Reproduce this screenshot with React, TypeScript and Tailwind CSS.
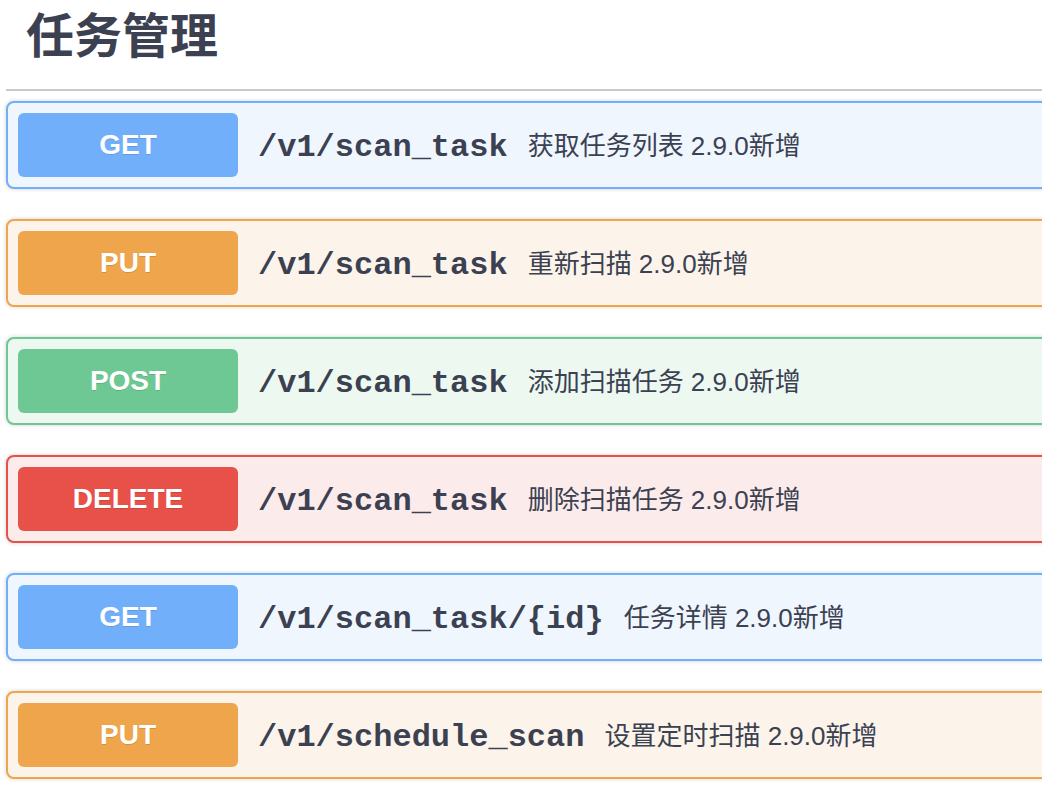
import React from 'react';

interface Op {
	method: 'GET' | 'PUT' | 'POST' | 'DELETE';
	path: string;
	summary: string;
}

const ops: Op[] = [
	{ method: 'GET', path: '/v1/scan_task', summary: '获取任务列表 2.9.0新增' },
	{ method: 'PUT', path: '/v1/scan_task', summary: '重新扫描 2.9.0新增' },
	{ method: 'POST', path: '/v1/scan_task', summary: '添加扫描任务 2.9.0新增' },
	{ method: 'DELETE', path: '/v1/scan_task', summary: '删除扫描任务 2.9.0新增' },
	{ method: 'GET', path: '/v1/scan_task/{id}', summary: '任务详情 2.9.0新增' },
	{ method: 'PUT', path: '/v1/schedule_scan', summary: '设置定时扫描 2.9.0新增' },
];

const styles: Record<Op['method'], { box: string; badge: string }> = {
	GET: { box: 'border-[#72affa] bg-[#eff6fe]', badge: 'bg-[#72affa]' },
	PUT: { box: 'border-[#efa54b] bg-[#fcf4ea]', badge: 'bg-[#efa54b]' },
	POST: { box: 'border-[#6ec893] bg-[#edf8f1]', badge: 'bg-[#6ec893]' },
	DELETE: { box: 'border-[#e8504a] bg-[#fcebeb]', badge: 'bg-[#e8504a]' },
};

const sans = "font-['Liberation_Sans','Noto_Sans_CJK_SC',sans-serif]";

const OpBlock: React.FC<{ op: Op }> = ({ op }) => {
	const s = styles[op.method];
	return (
		<div
			className={`mb-[30px] flex items-center rounded-[8px] border-2 p-[10px] shadow-[0_0_4px_rgba(0,0,0,0.18)] ${s.box}`}
		>
			{/* method badge */}
			<div
				className={`flex h-[64px] w-[220px] shrink-0 items-center justify-center rounded-[6px] text-[28px] font-bold text-white [text-shadow:0_1px_0_rgba(0,0,0,0.12)] ${s.badge} ${sans}`}
			>
				{op.method}
			</div>
			<span className="px-[20px] pt-[5px] font-['Liberation_Mono',monospace] text-[32px] font-bold text-[#3b4151]">
				{op.path}
			</span>
			<span className={`pt-[2px] text-[26px] text-[#3b4151] ${sans}`}>
				{op.summary}
			</span>
		</div>
	);
};

const App: React.FC = () => {
	return (
		<div className="h-[792px] w-[1042px] overflow-hidden bg-white">
			<div className="w-[1400px] pl-[6px]">
				<div
					className={`mb-[10px] h-[91px] border-b-2 border-[#c8c9cc] pl-[20px] pt-[13px] text-[48px] font-bold leading-[48px] text-[#3b4151] ${sans}`}
				>
					任务管理
				</div>
				{ops.map((op, i) => (
					<OpBlock key={i} op={op} />
				))}
			</div>
		</div>
	);
};

export default App;
